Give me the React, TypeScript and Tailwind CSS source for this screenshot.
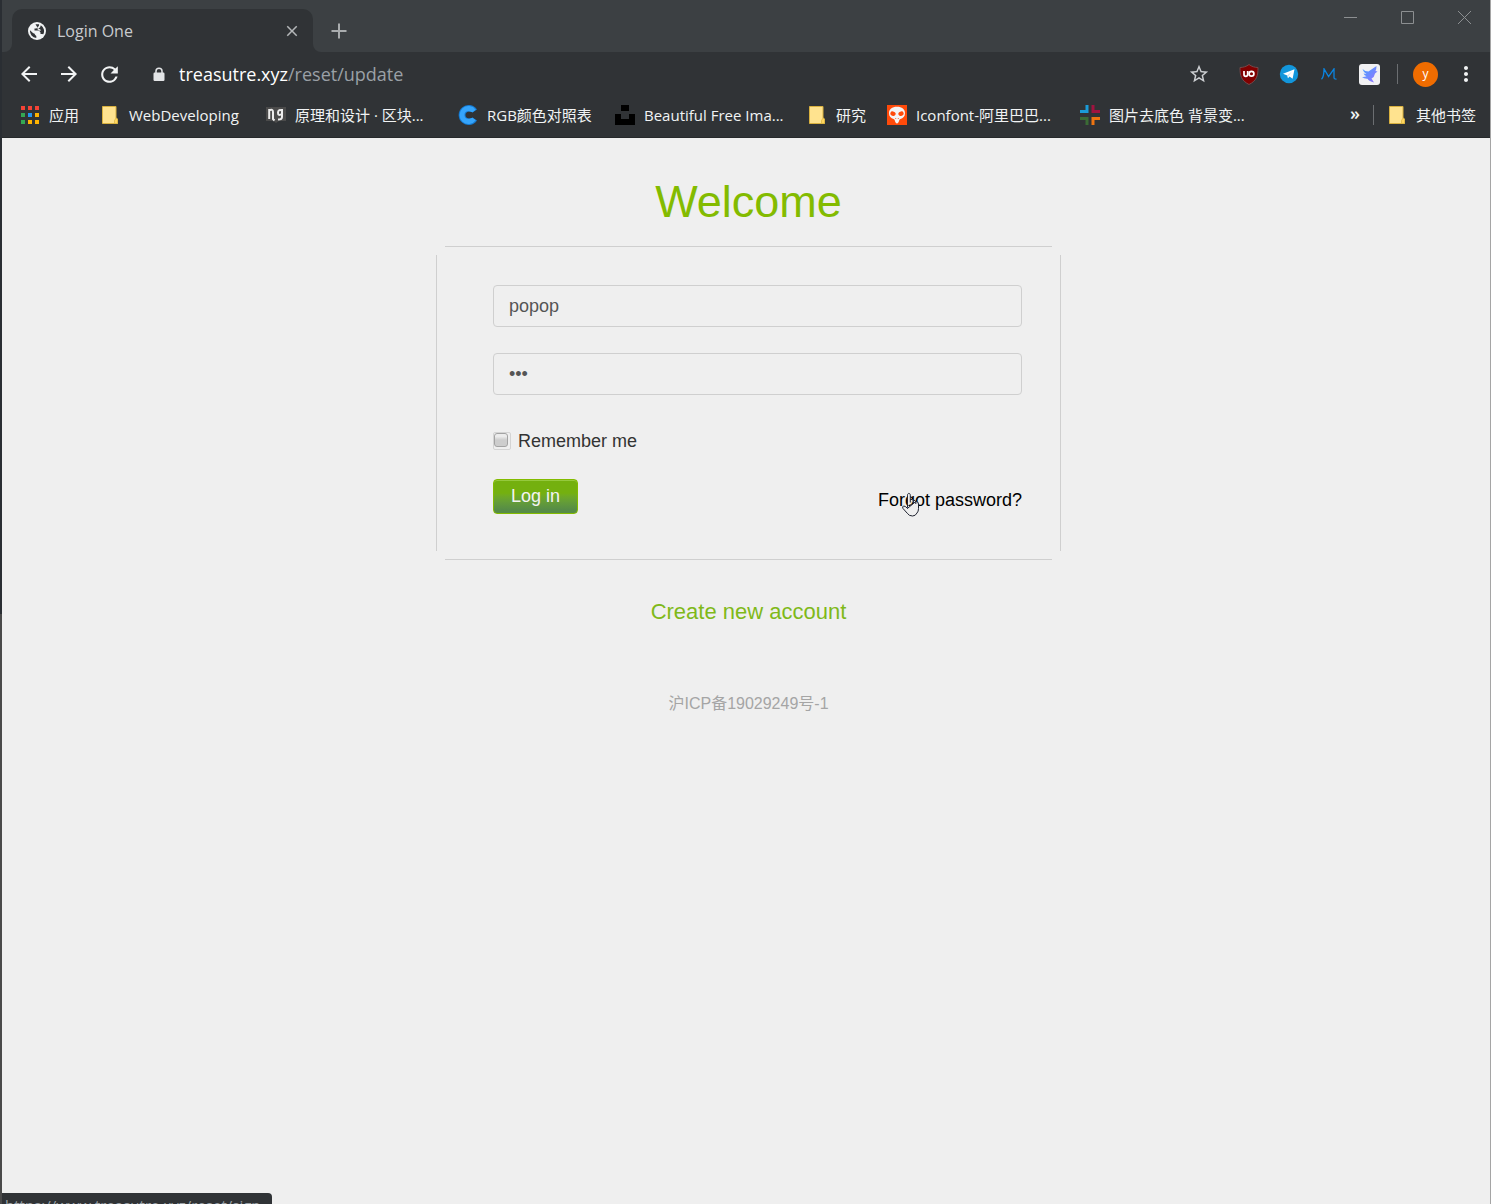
import type { ReactNode } from "react";
import {
  MdArrowBack,
  MdArrowForward,
  MdClose,
  MdMoreVert,
  MdRefresh,
  MdStarBorder,
} from "react-icons/md";

const GlobeIcon = () => (
  <svg viewBox="0 0 18 18" className="size-[18px]">
    <circle cx="9" cy="9" r="9" fill="#f1f3f4" />
    <path
      d="M2 8.200 5.200 11.200Q7 11 7 12.800L8.300 14V16A7 7 0 0 1 2 8.200zM7.500 2.300 11 2.300Q11.500 4.500 9.500 5L8.500 6.500H6.500V8.500H11L12.500 10.500V12H14L15.300 12.300A7 7 0 0 0 12.800 3.200L12 5.500 10 6.500"
      fill="#303336"
    />
    <path d="M9.500 6.500 12.500 8.500" stroke="#f1f3f4" strokeWidth="1.500" />
  </svg>
);

const LockIcon = () => (
  <svg viewBox="0 0 12 15" className="h-[15px] w-3">
    <path d="M3 6.500V4Q3 1.200 6 1.200T9 4v2.500" fill="none" stroke="#e3e5e7" strokeWidth="1.500" />
    <rect x=".5" y="5.500" width="11" height="8.500" rx="1.200" fill="#e3e5e7" />
  </svg>
);

const AppsIcon = () => (
  <svg viewBox="0 0 18 18" className="size-[18px]">
    {["#f44336", "#f44336", "#f44336", "#34a853", "#2196f3", "#ffb300", "#34a853", "#ffb300", "#ffb300"].map(
      (fill, i) => (
        <rect key={i} x={(i % 3) * 7} y={Math.floor(i / 3) * 7} width="4" height="4" fill={fill} />
      ),
    )}
  </svg>
);

const FolderIcon = () => (
  <svg viewBox="0 0 18 20" className="h-5 w-[18px]">
    <path d="M1.500 1.500h13.500v11.500l1.500 1v4.500h-15z" fill="#ffe38f" stroke="#d9b13f" />
    <path d="M13.500 18.500v-3l1.500-2.500 1.500 1v4.500z" fill="#ffd65e" stroke="#d9b13f" strokeWidth=".7" />
  </svg>
);

const BookIcon = () => (
  <svg viewBox="0 0 20 20" className="size-5">
    <path d="M0 2h20v14h-7l-3 2-3-2H0z" fill="#4b4b4b" />
    <path
      d="M3.200 4v10M3 5.500Q7 3.500 7 7v7l1.500 1.500"
      fill="none"
      stroke="#ececec"
      strokeWidth="2"
    />
    <path
      d="M16 4v8q0 2.500-4 2.500M16 5.500q-4-1.500-4 2.200t4 1.300"
      fill="none"
      stroke="#ececec"
      strokeWidth="2"
    />
  </svg>
);

const CIcon = () => (
  <svg viewBox="0 0 20 20" className="size-5">
    <path d="M19 4.500A10 10 0 1 0 19 15.500L14.500 12.500Q12.500 14 10.500 13.500 7.500 12.500 7.500 10T10.500 6.500Q12.500 6 14.500 7.500z" fill="#1479d0" />
    <path d="M17.800 4.700A9 9 0 1 0 17.800 15.300L14.500 12.800Q6.500 15.500 6.500 10T14.500 7.200z" fill="#35a4fb" />
  </svg>
);

const UnsplashIcon = () => (
  <svg viewBox="0 0 20 20" className="size-5">
    <path d="M6 0h8v6H6zM0 9h6v5h8V9h6v11H0z" fill="#000" />
  </svg>
);

const IconfontIcon = () => (
  <svg viewBox="0 0 20 20" className="size-5">
    <path d="M0 0h20v20H0z" fill="#ff4a0a" />
    <path
      d="M10 1.800c5 0 8 2.600 8 6.500 0 3.200-2 5-4.500 5.700-1.700.4-1.500 4.500-3.500 4.500S8.200 14.400 6.500 14C4 13.300 2 11.500 2 8.300c0-3.900 3-6.500 8-6.500z"
      fill="#f4f4f4"
    />
    <ellipse cx="6" cy="8.700" rx="2.700" ry="2.200" fill="#ff4a0a" transform="rotate(20 6 8.700)" />
    <ellipse cx="14" cy="8.700" rx="2.700" ry="2.200" fill="#ff4a0a" transform="rotate(-20 14 8.700)" />
    <path d="M8.700 13v1M11.300 13v1" stroke="#ff4a0a" strokeWidth=".8" />
  </svg>
);

const CrossIcon = () => (
  <svg viewBox="0 0 20 20" className="size-5" fill="none" strokeWidth="3">
    <path d="M7 0v6.500H0" stroke="#1a9bd7" />
    <path d="M13 0v6.500h7" stroke="#a0133f" />
    <path d="M0 13.500h7V20" stroke="#3a6b35" />
    <path d="M20 13.500h-7V20" stroke="#ee7410" />
  </svg>
);

const ShieldIcon = () => (
  <svg viewBox="0 0 20 21" className="h-[21px] w-5">
    <path d="M10 .5C7.500 2.500 4 3.500 1 3.500c0 8 1 13 9 17 8-4 9-9 9-17-3 0-6.500-1-9-3z" fill="#800000" stroke="#74484a" />
    <path d="M5 7v3.500q0 1.800 1.800 1.800T8.700 10.500V7" fill="none" stroke="#fff" strokeWidth="1.700" />
    <circle cx="12.500" cy="9.700" r="2.400" fill="none" stroke="#fff" strokeWidth="1.700" />
  </svg>
);

const TelegramIcon = () => (
  <svg viewBox="0 0 20 20" className="size-5">
    <circle cx="10" cy="10" r="9.200" fill="#1296db" />
    <path d="M4 9.800 15.500 5.200 13.600 14.800 10.500 12.600 9 14.200 8.300 11.400z" fill="#fff" />
    <path d="M8.300 11.400 13 7.500 9.300 11.900 9 14.200z" fill="#b4d7ea" />
  </svg>
);

const MIcon = () => (
  <svg viewBox="0 0 16 12" className="h-3 w-4" fill="none" stroke="#0a84e0" strokeWidth="1.300">
    <path d="M.5 11.200C2.600 9.500 3 5 3 .8L7.600 8.500 13 .8V9.500q0 1.800 2.500 1.700" />
  </svg>
);

const BirdIcon = () => (
  <svg viewBox="0 0 21 21" className="size-[21px]">
    <defs>
      <linearGradient id="bird" x1="0" y1="0" x2="1" y2="1">
        <stop offset="0" stopColor="#42a5ff" />
        <stop offset="1" stopColor="#9a70ff" />
      </linearGradient>
    </defs>
    <rect width="21" height="21" rx="3" fill="#f1f1f3" />
    <path
      d="M3.500 5Q6 7.500 9.500 7.500 12 5.500 17.500 2 17.500 5 16.500 7L18.500 7.500 16 9.500Q15.500 13 12.500 14.500L15 18.500Q10 17.500 8.500 14.800 5 15 3 13 5.500 13.300 7.500 12.300 5.500 11.500 4.500 9.500L7.500 10Q4.500 8.500 3.500 5z"
      fill="url(#bird)"
    />
  </svg>
);

const HandCursor = () => (
  <svg viewBox="0 0 20 26" className="pointer-events-none absolute left-[18px] top-[2px] h-[26px] w-5">
    <path
      d="M6.500 15V3.200C6.500.8 9.300.8 9.300 3.200V10.500M9.300 7.500q2.500-.7 2.800 1.300V11M12.100 8.300q2.500-.3 2.700 1.500V12M14.800 9.500q2.500-.3 2.700 2.500V16.500q0 3-1.500 4.500-1.500 3-4.500 3-3.500 0-5.200-2.700L2 16.500Q1 14.700 2.500 14q1.500-.3 4 2.400z"
      fill="#efefef"
      stroke="#1f2330"
      strokeLinejoin="round"
    />
  </svg>
);

type BookmarkProps = { label: string; icon: ReactNode; className?: string };

const Bookmark = ({ label, icon, className = "" }: BookmarkProps) => (
  <a href="#" className={`flex shrink-0 items-center gap-[9px] whitespace-nowrap ${className}`}>
    <span className="flex w-5 justify-center">{icon}</span>
    {label}
  </a>
);

const bookmarks: BookmarkProps[] = [
  { label: "应用", icon: <AppsIcon />, className: "w-20" },
  { label: "WebDeveloping", icon: <FolderIcon />, className: "w-[166px]" },
  { label: "原理和设计 · 区块...", icon: <BookIcon />, className: "w-[192px]" },
  { label: "RGB颜色对照表", icon: <CIcon />, className: "w-[157px]" },
  { label: "Beautiful Free Ima...", icon: <UnsplashIcon />, className: "w-[192px]" },
  { label: "研究", icon: <FolderIcon />, className: "w-20" },
  { label: "Iconfont-阿里巴巴...", icon: <IconfontIcon />, className: "w-[193px]" },
  { label: "图片去底色 背景变...", icon: <CrossIcon /> },
];

function TabStrip() {
  return (
    <div className="flex h-[52px] items-end justify-between bg-[#3c4043] pl-[2px]">
      <div className="flex items-end">
        <div className="size-2 bg-[#303336]">
          <div className="size-2 rounded-br-lg bg-[#3c4043]" />
        </div>
        <div className="flex h-[43px] w-[301px] items-center rounded-t-[10px] bg-[#303336] pl-4 pr-3">
          <GlobeIcon />
          <span className="ml-[11px] grow text-[16px] text-[#c8cbce]">Login One</span>
          <button type="button" aria-label="Close tab" className="text-[#b4b7b9]">
            <MdClose className="size-[18px]" />
          </button>
        </div>
        <div className="size-2 bg-[#303336]">
          <div className="size-2 rounded-bl-lg bg-[#3c4043]" />
        </div>
        <button type="button" aria-label="New tab" className="mb-[11px] ml-2 flex size-5 items-center justify-center">
          <svg viewBox="0 0 16 16" className="size-4" stroke="#a9acae" strokeWidth="2">
            <path d="M8 .5v15M.5 8h15" />
          </svg>
        </button>
      </div>
      <div className="flex gap-[42px] self-start pr-[18px] pt-[10px]">
        {[
          { name: "Minimize", d: "M1 7.500h13" },
          { name: "Maximize", d: "M1.500 1.500h12v12h-12z" },
          { name: "Close", d: "M1 1l13 13M14 1 1 14" },
        ].map(({ name, d }) => (
          <button key={name} type="button" aria-label={name}>
            <svg viewBox="0 0 15 15" className="size-[15px]" fill="none" stroke="#8c8f91">
              <path d={d} />
            </svg>
          </button>
        ))}
      </div>
    </div>
  );
}

function Toolbar() {
  return (
    <div className="flex h-11 items-center bg-[#303336] pl-[15px] text-[#f1f3f4]">
      <div className="flex gap-4">
        <button type="button" aria-label="Back"><MdArrowBack className="size-6" /></button>
        <button type="button" aria-label="Forward"><MdArrowForward className="size-6" /></button>
        <button type="button" aria-label="Reload"><MdRefresh className="size-[25px]" /></button>
      </div>
      <span className="ml-[31px]"><LockIcon /></span>
      <div className="ml-[14px] grow text-lg text-[#9aa0a6]">
        <span className="text-white">treasutre.xyz</span>/reset/update
      </div>
      <button type="button" aria-label="Bookmark this page" className="text-[#cdd0d3]">
        <MdStarBorder className="size-[22px]" />
      </button>
      <div className="ml-[29px] flex items-center gap-5">
        <ShieldIcon />
        <TelegramIcon />
        <span className="flex w-5 justify-center"><MIcon /></span>
        <BirdIcon />
      </div>
      <div className="ml-[17px] h-5 w-px bg-[#6b6e71]" />
      <button type="button" className="ml-[15px] flex size-[25px] items-center justify-center rounded-full bg-[#ef6c00] text-xs text-white">
        y
      </button>
      <button type="button" aria-label="Menu" className="ml-4 mr-3">
        <MdMoreVert className="size-6" />
      </button>
    </div>
  );
}

function BookmarksBar() {
  return (
    <div className="flex h-[42px] items-center border-b border-[#26292b] bg-[#303336] pb-[3px] pl-[18px] text-[15px] text-[#f1f3f4]">
      <div className="flex min-w-0 grow overflow-hidden">
        {bookmarks.map((b) => (
          <Bookmark key={b.label} {...b} />
        ))}
      </div>
      <button type="button" className="pb-1 text-lg font-semibold">»</button>
      <div className="ml-[13px] h-5 w-px bg-[#6b6e71]" />
      <Bookmark label="其他书签" icon={<FolderIcon />} className="ml-[13px] mr-[14px]" />
    </div>
  );
}

function LoginPage() {
  const field =
    "h-[42px] w-full rounded-[4px] border border-[#cfcfcf] bg-transparent px-[15px] text-[18px] text-[#555] outline-none";
  return (
    <main className="flex grow flex-col items-center bg-[#efefef] pl-[5px] font-['Liberation_Sans','Noto_Sans_CJK_SC',sans-serif]">
      <h1 className="mt-[38px] text-[45px] leading-[52px] text-[#83bb00]">Welcome</h1>
      <form className="mt-[18px] w-full max-w-[625px]" onSubmit={(e) => e.preventDefault()}>
        <div className="mx-[9px] h-px bg-[#cfcfcf]" />
        <div className="my-2 border-x border-[#cfcfcf] pb-[37px] pl-14 pr-[38px] pt-[30px]">
          <input className={field} type="text" aria-label="User name" defaultValue="popop" />
          <input className={`${field} mt-[26px]`} type="password" aria-label="Password" defaultValue="123" />
          <label className="mt-9 flex items-center gap-[7px] text-[18px] leading-5 text-[#333]">
            <span className="flex size-[18px] rounded-[2px] border border-[#d4d4d4]">
              <input
                type="checkbox"
                className="size-[14px] appearance-none rounded-[3px] border border-[#a3a3a3] bg-linear-to-b from-[#ececec] from-20% to-[#cdcdcd] to-50% checked:bg-[#83bb00]"
              />
            </span>
            Remember me
          </label>
          <div className="mt-7 flex items-start justify-between">
            <button
              type="submit"
              className="h-[35px] w-[85px] rounded-[4px] border border-[#83bb00] bg-linear-to-b from-[#74b00f] from-40% to-[#568c46] to-90% pb-[2px] text-[18px] leading-5 text-[#f3f3f3] shadow-[inset_0_1px_0_#95c93d]"
            >
              Log in
            </button>
            <a href="#" className="relative mt-[11px] text-[18px] leading-5 text-black">
              Forgot password?
              <span className="absolute left-[5px] top-0">
                <HandCursor />
              </span>
            </a>
          </div>
        </div>
        <div className="mx-[9px] h-px bg-[#cfcfcf]" />
      </form>
      <a href="#" className="mt-[38px] text-[22px] leading-7 text-[#7fb919]">Create new account</a>
      <a href="#" className="mt-[68px] text-[16px] leading-5 text-[#a5a5a5]">沪ICP备19029249号-1</a>
    </main>
  );
}

export default function App() {
  return (
    <div className="flex min-h-screen bg-[#efefef] font-['Open_Sans','Noto_Sans_CJK_SC',sans-serif]">
      <div className="w-[2px] shrink-0 bg-linear-to-b from-[#2a2e33] from-[51%] to-[#4a4a4a] to-[51%]" />
      <div className="relative flex min-w-0 grow flex-col border-r border-[#a5a5a5]">
        <header>
          <TabStrip />
          <Toolbar />
          <BookmarksBar />
        </header>
        <LoginPage />
        <div className="absolute bottom-0 left-0 h-[11px] w-[270px] overflow-hidden rounded-tr-[4px] bg-[#303336] pl-[3px] pt-[2px] text-[15px] leading-5 text-[#9aa0a6]">
          https://www.treasutre.xyz/reset/sign
        </div>
      </div>
    </div>
  );
}
